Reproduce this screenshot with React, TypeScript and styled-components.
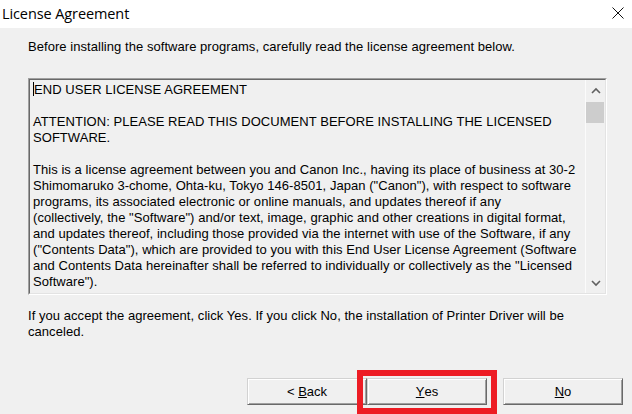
import React from "react";
import styled, { createGlobalStyle } from "styled-components";

const Global = createGlobalStyle`
  html, body { margin: 0; padding: 0; background: #f0f0f0; }
  * { box-sizing: border-box; }
`;

const Window = styled.div`
  width: 632px;
  height: 414px;
  background: #f0f0f0;
  overflow: hidden;
  display: flex;
  flex-direction: column;
  font-family: "Liberation Sans", Arial, sans-serif;
  font-size: 13px;
  color: #000;
`;

const TitleBar = styled.div`
  height: 28px;
  flex: 0 0 28px;
  background: #fff;
  display: flex;
  align-items: center;
  justify-content: space-between;
  padding: 0 8px 2px 2px;
`;

const Title = styled.div`
  font-family: "Open Sans", "Noto Sans", sans-serif;
  font-size: 14.5px;
  color: #000;
  letter-spacing: -0.1px;
`;

const CloseIcon = styled.svg`
  width: 12px;
  height: 12px;
  display: block;
`;

const Body = styled.div`
  flex: 1;
  display: flex;
  flex-direction: column;
  padding: 11px 0 0 28px;
`;

const Paragraph = styled.p<{ $gap?: number }>`
  margin: 0 0 ${(p) => p.$gap ?? 0}px 0;
  line-height: 16px;
  white-space: nowrap;
  letter-spacing: 0.05px;
`;

const SunkenOuter = styled.div`
  height: 217px;
  margin-right: 25px;
  border: 1px solid;
  border-color: #a0a0a0 #ffffff #ffffff #a0a0a0;
  display: flex;
`;

const SunkenInner = styled.div`
  flex: 1;
  border: 1px solid;
  border-color: #696969 #e3e3e3 #e3e3e3 #696969;
  display: flex;
  background: #f0f0f0;
  overflow: hidden;
`;

const LicenseText = styled.div`
  flex: 1;
  padding: 2px 3px;
  line-height: 16px;
  white-space: pre;
  letter-spacing: 0.05px;
  overflow: hidden;
`;

const Line = styled.div`
  height: 16px;
`;

const Caret = styled.span`
  display: inline-block;
  width: 1px;
  height: 14px;
  background: #000;
  vertical-align: -2px;
`;

const Scrollbar = styled.div`
  width: 20px;
  flex: 0 0 20px;
  border-left: 1px solid #fbfbfb;
  display: flex;
  flex-direction: column;
  background: #f0f0f0;
`;

const ArrowButton = styled.div`
  height: 20px;
  display: flex;
  align-items: center;
  justify-content: center;
`;

const Thumb = styled.div`
  height: 21px;
  margin: 2px 1px 0 0;
  background: #cdcdcd;
`;

const Track = styled.div`
  flex: 1;
`;

const ButtonRow = styled.div`
  margin-top: 38px;
  display: flex;
  justify-content: flex-end;
  padding-right: 9px;
`;

const Button = styled.div<{ $gapLeft?: number }>`
  width: 120px;
  height: 27px;
  margin-left: ${(p) => p.$gapLeft ?? 0}px;
  background: #f0f0f0;
  border: 1px solid;
  border-color: #d2d2d2 #696969 #696969 #d2d2d2;
  box-shadow: inset 1px 1px 0 #ffffff, inset -1px -1px 0 #a0a0a0;
  display: flex;
  align-items: center;
  justify-content: center;
  font-size: 13px;
  color: #000;
  padding-bottom: 1px;
  white-space: pre;
`;

const Highlighted = styled.div`
  position: relative;
`;

const Highlight = styled.div`
  position: absolute;
  left: -10px;
  right: -10px;
  top: -8px;
  bottom: -9px;
  border: 6px solid #ed1c24;
  pointer-events: none;
`;

const licenseLines = [
  "END USER LICENSE AGREEMENT",
  "",
  "ATTENTION: PLEASE READ THIS DOCUMENT BEFORE INSTALLING THE LICENSED",
  "SOFTWARE.",
  "",
  "This is a license agreement between you and Canon Inc., having its place of business at 30-2",
  "Shimomaruko 3-chome, Ohta-ku, Tokyo 146-8501, Japan (\"Canon\"), with respect to software",
  "programs, its associated electronic or online manuals, and updates thereof if any",
  "(collectively, the \"Software\") and/or text, image, graphic and other creations in digital format,",
  "and updates thereof, including those provided via the internet with use of the Software, if any",
  "(\"Contents Data\"), which are provided to you with this End User License Agreement (Software",
  "and Contents Data hereinafter shall be referred to individually or collectively as the \"Licensed",
  "Software\").",
];

const Chevron = ({ up }: { up?: boolean }) => (
  <svg width="10" height="7" viewBox="0 0 10 7">
    <polyline
      points={up ? "1,6 5,2 9,6" : "1,1 5,5 9,1"}
      fill="none"
      stroke="#606060"
      strokeWidth="1.6"
    />
  </svg>
);

export default function App() {
  return (
    <>
      <Global />
      <Window>
        <TitleBar>
          <Title>License Agreement</Title>
          <CloseIcon viewBox="0 0 12 12">
            <path d="M0.5 0.5 L11.5 11.5 M11.5 0.5 L0.5 11.5" stroke="#111" strokeWidth="1" />
          </CloseIcon>
        </TitleBar>
        <Body>
          <Paragraph $gap={23}>
            Before installing the software programs, carefully read the license agreement below.
          </Paragraph>
          <SunkenOuter>
            <SunkenInner>
              <LicenseText>
                {licenseLines.map((l, i) => (
                  <Line key={i}>
                    {i === 0 && <Caret />}
                    {l}
                  </Line>
                ))}
              </LicenseText>
              <Scrollbar>
                <ArrowButton>
                  <Chevron up />
                </ArrowButton>
                <Thumb />
                <Track />
                <ArrowButton>
                  <Chevron />
                </ArrowButton>
              </Scrollbar>
            </SunkenInner>
          </SunkenOuter>
          <Paragraph style={{ marginTop: 13 }}>
            If you accept the agreement, click Yes. If you click No, the installation of Printer Driver will be
            <br />
            canceled.
          </Paragraph>
          <ButtonRow>
            <Button>
              {"< "}
              <u>B</u>
              {"ack"}
            </Button>
            <Highlighted>
              <Button>
                <u>Y</u>
                {"es"}
              </Button>
              <Highlight />
            </Highlighted>
            <Button $gapLeft={16}>
              <u>N</u>
              {"o"}
            </Button>
          </ButtonRow>
        </Body>
      </Window>
    </>
  );
}
